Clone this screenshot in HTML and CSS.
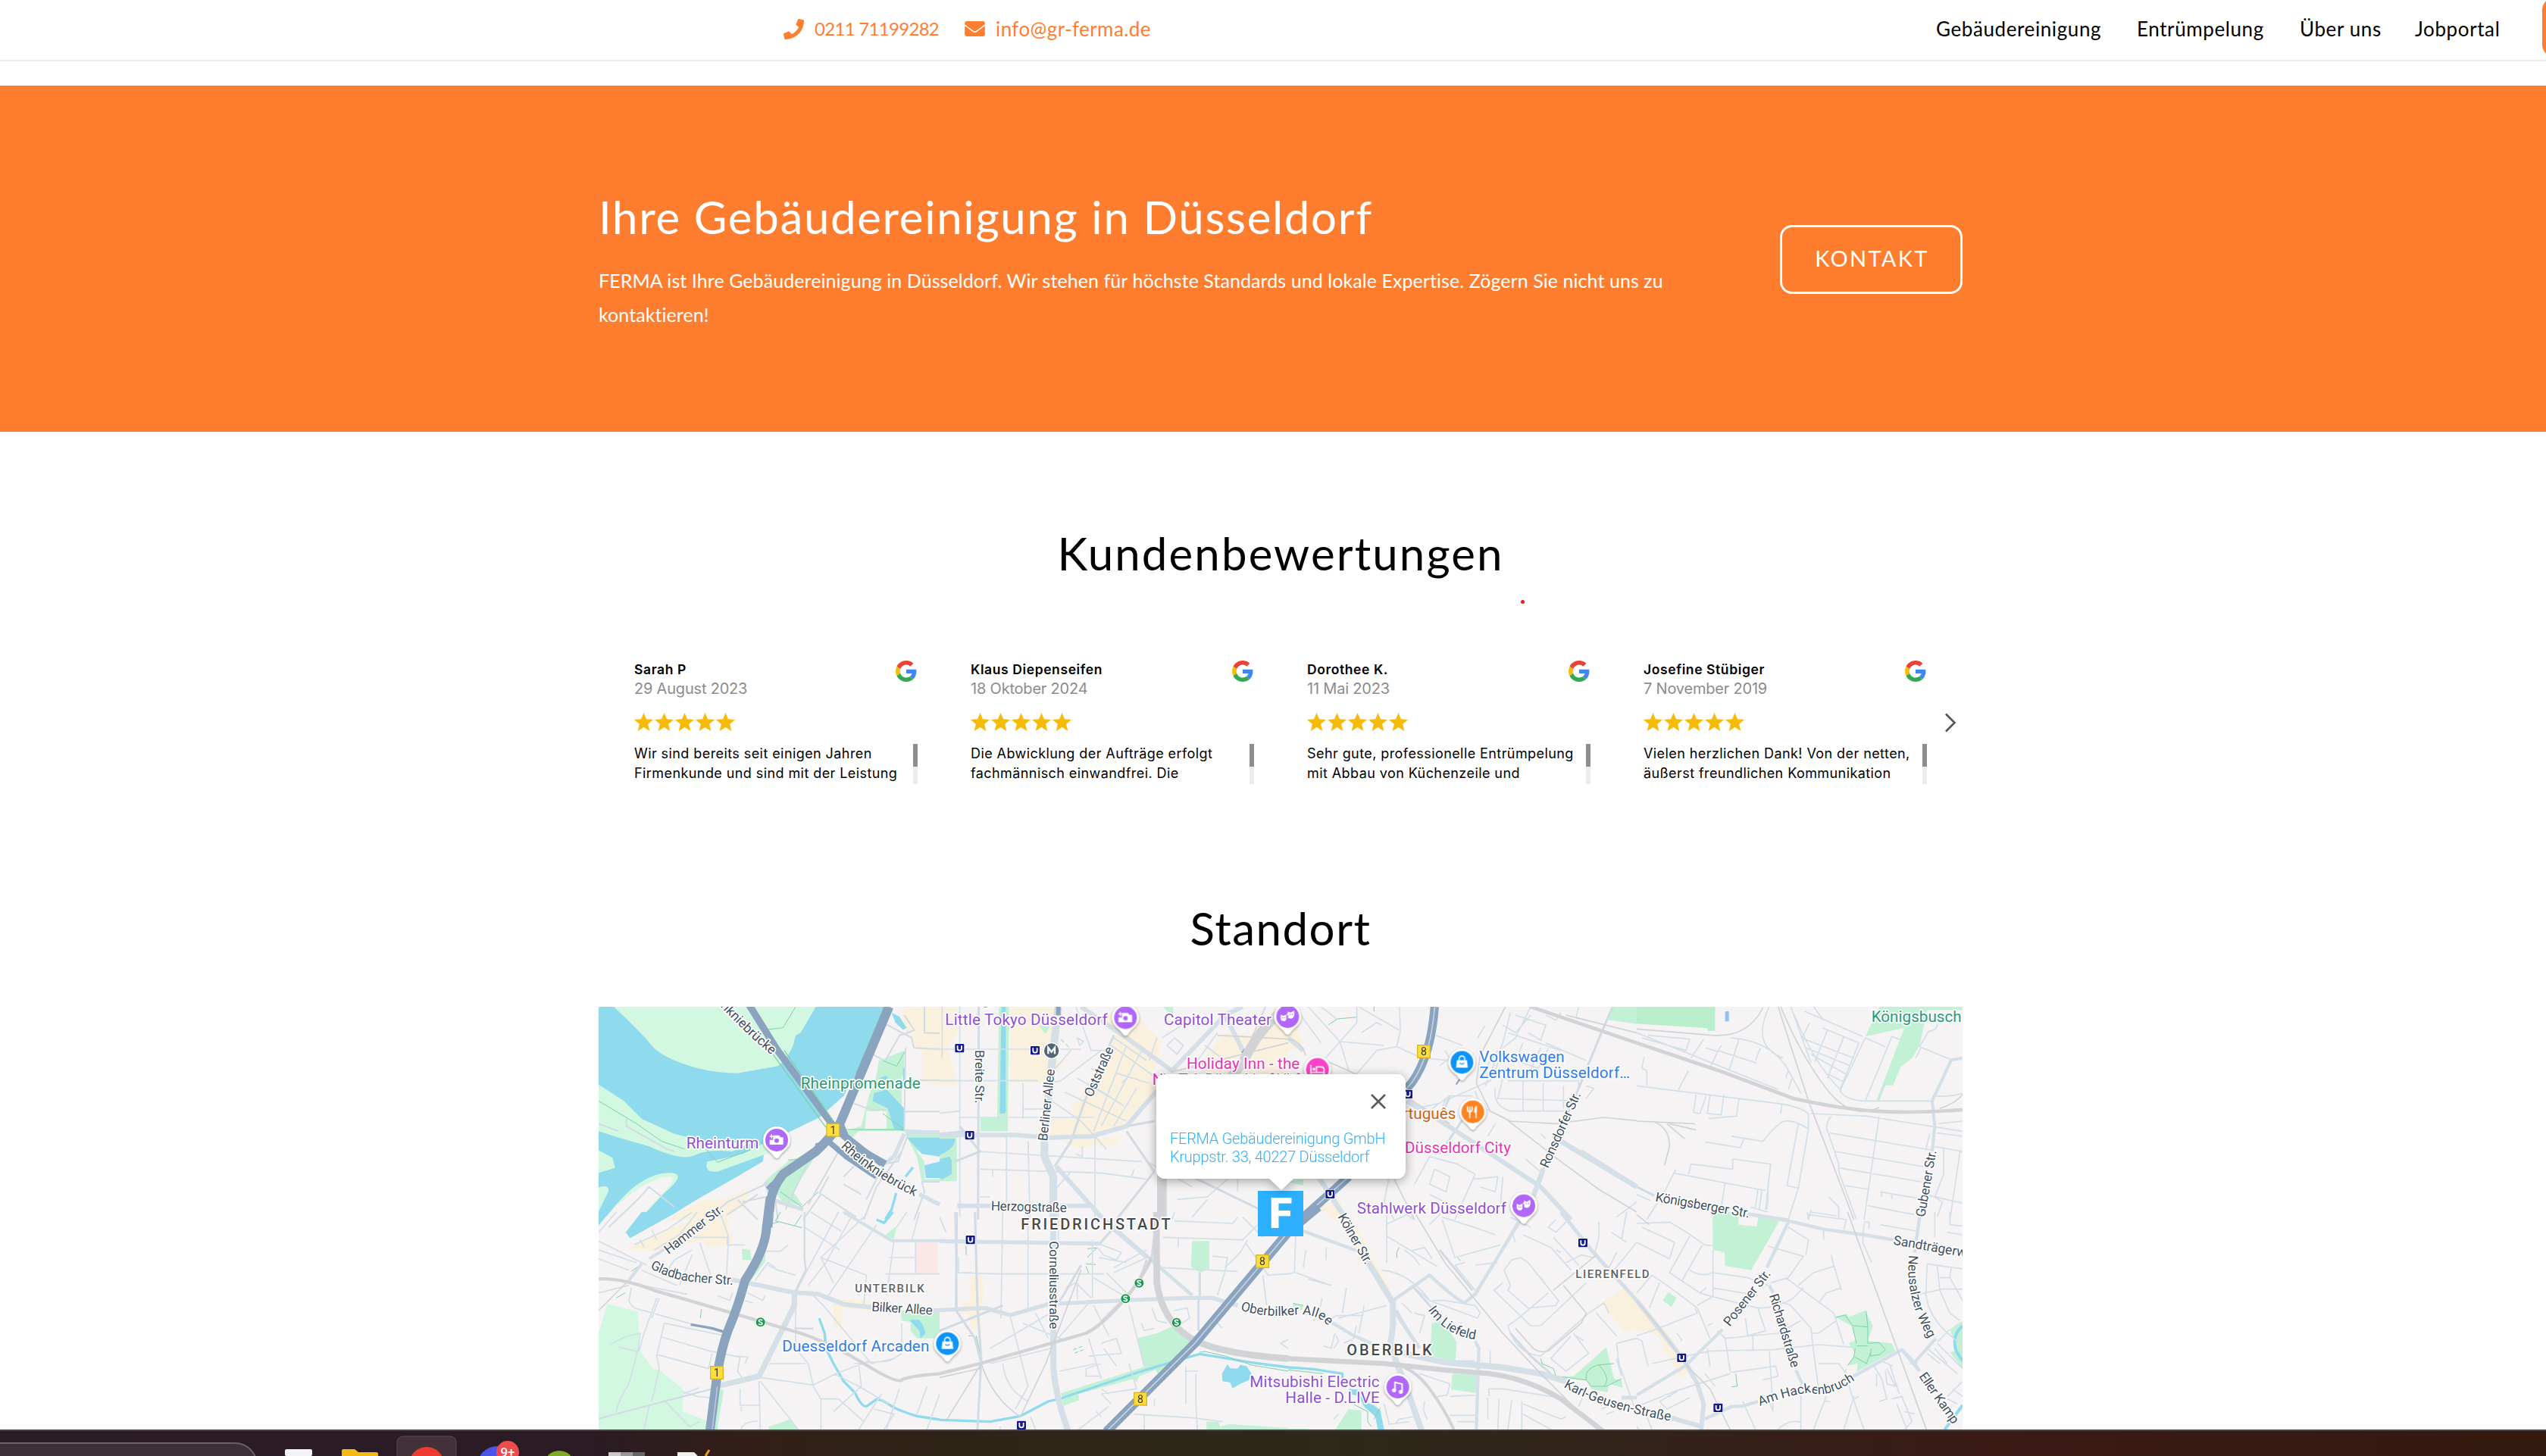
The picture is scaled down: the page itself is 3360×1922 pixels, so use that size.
FILE: index.html
```html
<!DOCTYPE html>
<html lang="de">
<head>
<meta charset="utf-8">
<title>FERMA Gebäudereinigung Düsseldorf</title>
<link rel="stylesheet" href="styles.css">
</head>
<body>
<svg class="defs" aria-hidden="true">
  <defs>
    <symbol id="google" viewBox="0 0 48 48">
      <path fill="#EA4335" d="M24 9.5c3.54 0 6.71 1.22 9.21 3.6l6.85-6.85C35.9 2.38 30.47 0 24 0 14.62 0 6.51 5.38 2.56 13.22l7.98 6.19C12.43 13.72 17.74 9.5 24 9.5z"/>
      <path fill="#4285F4" d="M46.98 24.55c0-1.57-.15-3.09-.38-4.55H24v9.02h12.94c-.58 2.96-2.26 5.48-4.78 7.18l7.73 6c4.51-4.18 7.09-10.36 7.09-17.65z"/>
      <path fill="#FBBC05" d="M10.53 28.59c-.48-1.45-.76-2.99-.76-4.59s.27-3.14.76-4.59l-7.98-6.19C.92 16.46 0 20.12 0 24s.92 7.54 2.56 10.78l7.97-6.19z"/>
      <path fill="#34A853" d="M24 48c6.48 0 11.93-2.13 15.89-5.81l-7.73-6c-2.15 1.45-4.92 2.3-8.16 2.3-6.26 0-11.57-4.22-13.47-9.91l-7.98 6.19C6.51 42.62 14.62 48 24 48z"/>
    </symbol>
    <symbol id="stars" viewBox="0 0 133 24">
      <g fill="#f6bb06">
        <path d="M12.500 0L16 8.300 25 9l-6.900 5.800L20.300 24l-7.800-5-7.800 5 2.200-9.200L0 9l9-.7z"/>
        <path transform="translate(27)" d="M12.500 0L16 8.300 25 9l-6.900 5.800L20.300 24l-7.800-5-7.800 5 2.200-9.200L0 9l9-.7z"/>
        <path transform="translate(54)" d="M12.500 0L16 8.300 25 9l-6.900 5.800L20.300 24l-7.800-5-7.800 5 2.200-9.200L0 9l9-.7z"/>
        <path transform="translate(81)" d="M12.500 0L16 8.300 25 9l-6.900 5.800L20.300 24l-7.800-5-7.800 5 2.200-9.200L0 9l9-.7z"/>
        <path transform="translate(108)" d="M12.500 0L16 8.300 25 9l-6.900 5.800L20.300 24l-7.800-5-7.800 5 2.200-9.200L0 9l9-.7z"/>
      </g>
    </symbol>
  </defs>
</svg>

<header class="topbar">
  <div class="contact">
    <a class="contact-item"><svg class="ic-phone" viewBox="0 0 512 512"><path fill="currentColor" d="M493.400 24.600l-104-24c-11.300-2.600-22.900 3.300-27.500 13.900l-48 112c-4.200 9.800-1.400 21.300 6.900 28l60.600 49.600c-36 76.700-98.900 140.500-177.200 177.200l-49.600-60.600c-6.800-8.300-18.200-11.100-28-6.900l-112 48C3.900 366.500-2 378.100.6 389.400l24 104C27.100 504.200 36.700 512 48 512c256.100 0 464-207.500 464-464 0-11.200-7.700-20.900-18.600-23.400z"/></svg><span class="phone">0211 71199282</span></a>
    <a class="contact-item"><svg class="ic-mail" viewBox="0 0 512 384"><path fill="currentColor" d="M502.300 126.800c3.900-3.100 9.700-.2 9.700 4.700V336c0 26.500-21.500 48-48 48H48c-26.500 0-48-21.500-48-48V131.600c0-5 5.700-7.800 9.700-4.700 22.400 17.400 52.100 39.500 154.100 113.600 21.100 15.400 56.700 47.800 92.200 47.600 35.700.3 72-32.800 92.300-47.600 102-74.100 131.600-96.300 154-113.700zM256 256c23.200.4 56.600-29.200 73.400-41.400 132.700-96.300 142.800-104.700 173.400-128.700 5.800-4.500 9.200-11.500 9.200-18.900V48c0-26.500-21.500-48-48-48H48C21.500 0 0 21.500 0 48v19c0 7.400 3.400 14.300 9.200 18.900 30.600 23.900 40.700 32.400 173.400 128.700 16.800 12.200 50.200 41.800 73.400 41.400z"/></svg><span class="mail">info@gr-ferma.de</span></a>
  </div>
  <nav class="nav">
    <a class="n1">Gebäudereinigung</a><a class="n2">Entrümpelung</a><a class="n3">Über uns</a><a class="n4">Jobportal</a>
  </nav>
  <div class="nav-cta"></div>
</header>

<section class="hero">
  <div class="wrap hero-inner">
    <div class="hero-text">
      <h1>Ihre Gebäudereinigung in Düsseldorf</h1>
      <p>FERMA ist Ihre Gebäudereinigung in Düsseldorf. Wir stehen für höchste Standards und lokale Expertise. Zögern Sie nicht uns zu<br>kontaktieren!</p>
    </div>
    <a class="hero-btn">KONTAKT</a>
  </div>
</section>

<main class="wrap">
  <h2 class="h-reviews">Kundenbewertungen<i class="dot"></i></h2>
  <div class="reviews">
    <article class="review">
      <div class="head"><div><b>Sarah P</b><time>29 August 2023</time></div><svg class="g"><use href="#google"/></svg></div>
      <svg class="stars"><use href="#stars"/></svg>
      <div class="body"><p>Wir sind bereits seit einigen Jahren<br>Firmenkunde und sind mit der Leistung</p><i class="scroll"></i></div>
    </article>
    <article class="review">
      <div class="head"><div><b>Klaus Diepenseifen</b><time>18 Oktober 2024</time></div><svg class="g"><use href="#google"/></svg></div>
      <svg class="stars"><use href="#stars"/></svg>
      <div class="body"><p>Die Abwicklung der Aufträge erfolgt<br>fachmännisch einwandfrei. Die</p><i class="scroll"></i></div>
    </article>
    <article class="review">
      <div class="head"><div><b>Dorothee K.</b><time>11 Mai 2023</time></div><svg class="g"><use href="#google"/></svg></div>
      <svg class="stars"><use href="#stars"/></svg>
      <div class="body"><p>Sehr gute, professionelle Entrümpelung<br>mit Abbau von Küchenzeile und</p><i class="scroll"></i></div>
    </article>
    <article class="review">
      <div class="head"><div><b>Josefine Stübiger</b><time>7 November 2019</time></div><svg class="g"><use href="#google"/></svg></div>
      <svg class="stars"><use href="#stars"/></svg>
      <div class="body"><p>Vielen herzlichen Dank! Von der netten,<br>äußerst freundlichen Kommunikation</p><i class="scroll"></i></div>
    </article>
    <svg class="next" viewBox="0 0 16 26"><path d="M2 1.500L13.500 13 2 24.500" fill="none" stroke="#555" stroke-width="2.600"/></svg>
  </div>
  <h2 class="h-map">Standort</h2>

  <div class="map">
  <svg class="map-svg" viewBox="30 27 5400 1674">
    <defs>
      <g id="pin"><path d="M-54 0A54 54 0 1 1 54 0C54 34 24 42 10 66Q0 78-10 66C-24 42-54 34-54 0Z" fill="#fff"/><circle r="45"/></g>
      <g id="cam"><path fill="#fff" d="M-12-19H10L15-11H26V18H-28V-1H-14V-11Z"/><circle r="9" cy="2" /><path d="M-20-23V-7M-28-15H-12" stroke="#fff" stroke-width="4"/></g>
      <g id="bag"><path fill="#fff" d="M-20-8H20L23 21H-23Z"/><path d="M-11-8V-14A11 11 0 0 1 11-14V-8" fill="none" stroke="#fff" stroke-width="5"/><path d="M-9 2Q0 11 9 2" fill="none" stroke="#0d94fb" stroke-width="4"/></g>
      <g id="masks"><path fill="#fff" d="M-28-8L-18-3-5-8V8Q-7 18-16 18-27 18-28 6ZM2-20L12-16 26-24V-8Q25 6 14 8L2 6V-6H-4Z"/><path d="M-22 5h4M-14 5h4M8-8h4M17-9h4" stroke="#b267fb" stroke-width="4"/></g>
      <g id="u"><rect x="-20" y="-19" width="40" height="38" rx="5" fill="#fff"/><rect x="-18" y="-17" width="36" height="34" rx="4" fill="#14198c"/><path d="M-8-10V2Q-8 9 0 9T8 2V-10" fill="none" stroke="#fff" stroke-width="5.500"/></g>
      <g id="s"><circle r="20" fill="#fff"/><circle r="18" fill="#16994c"/><path d="M8-7Q0-12-6-8-9-3 0 0 9 3 6 8-1 12-8 7" fill="none" stroke="#fff" stroke-width="5"/></g>
      <g id="sh"><rect x="-27" y="-27" width="54" height="54" fill="#d8b52a"/><rect x="-23" y="-23" width="46" height="46" fill="#ffdd3a"/></g>
      <path id="p-rk" d="M988 582Q1110 700 1290 782"/>
      <path id="p-gl" d="M233 222Q320 268 400 276T600 290"/>
      <path id="p-ob" d="M1190 388Q1290 420 1395 408T1540 455"/>
      <path id="p-lief" d="M553 388Q625 492 745 505"/>
      <path id="p-neu" d="M1078 170Q1060 340 1155 500"/>
      <path id="p-hack" d="M487 768Q600 725 690 714 750 740 860 668"/>
      <path id="p-karl" d="M1090 692Q1230 775 1500 825"/>
      <path id="p-kn" d="M420-80Q560 90 715 218"/>
    </defs>
    <rect x="30" y="27" width="5400" height="1674" fill="#f5f3f4"/>

    <!-- north-west: Rhine and harbour -->
    <g>
      <path class="com" d="M1240 27H1380V340L1310 320V200L1275 190V150L1225 100ZM300 870L440 795 560 780 600 750 625 770 600 820 520 870Z"/>
      <path class="water" d="M30 27H1170L1050 290 1000 380 905 465 780 525 690 570 680 640 560 710 420 790 330 845 155 942 130 915 30 960Z"/>
      <path class="pk2" d="M90 27Q200 130 240 180T420 270Q500 290 580 290L740 262Q780 230 800 180L810 140 830 130 890 27Z"/>
      <path class="pk2" d="M30 335L130 400 200 470 330 530 450 560 640 565 560 600Q460 590 410 615T230 580L110 545 30 520Z"/>
      <path class="pk2" d="M460 640Q520 630 600 610L700 560 720 600 500 680Q445 685 460 640ZM30 595L85 625 95 665 30 685ZM30 742Q70 730 70 755L30 838Z"/>
      <path class="pk2" d="M30 900Q130 760 200 720 260 680 320 685T290 765L140 925 155 945 30 960Z"/>
      <path class="land" d="M45 870Q130 780 200 740T310 700 270 780L145 915 150 950 30 960V895Z"/>
      <path class="pk" d="M1140 240L1240 200V300H1230V510L1380 520V555H1300L1290 600 1320 640V710H1380V720H1310L1290 620 1250 540 1240 520 1060 520 1030 550 1000 520 1070 500 1100 380 1130 300ZM690 715L780 640 880 600 900 600 800 760 840 815 760 800Z"/>
      <path class="land" d="M1090 440H1170V510H1085Z"/>
      <path class="water" d="M1190 50L1220 65 1250 110 1235 118 1205 90ZM1120 370L1170 355 1240 430V520L1200 510 1175 430 1115 400ZM1250 545H1380V620L1310 610ZM1320 655L1380 640V705H1325ZM1140 310L1170 300 1180 320ZM1235 270h8v50h-8Z"/>
      <path class="stream" d="M1275 662L1245 700M1208 765L1190 830 1165 868"/>
      <path class="pkline" d="M1160 27L1050 290M690 118L760 110 810 27M30 400L180 490 280 560 370 590M455 590L500 643 640 590M1000 513H1240L1155 450M1155 240L1210 262 1245 200M750 760L835 820 900 760M780 634L870 628"/>
      <path class="rd" style="stroke-width:6" d="M1165 95L1270 150 1278 190 1380 195M1225 135L1165 240M1115 215L1160 240M1040 410L1110 435H1170M1245 190L1240 520M1250 318H1380M1245 442H1380M1320 27V130L1380 132M1240 60L1280 120 1225 140M980 600L860 810M1380 520H1260L1215 640 1155 650M1040 660L1000 700M1160 650L1090 790M1000 730L1070 770M860 640L770 830M1230 600L1130 740 1080 870M940 700L905 765 1050 860M910 770L840 870M1380 720H1310L1320 760 1280 870M730 800L740 870M460 870L540 800 690 730M510 870L660 770M580 790L660 870M600 800L690 780M330 820L230 740 190 785 70 900M140 470V500L300 590 330 600M30 490L110 520"/>
      <path class="md" d="M730 795L840 830M1300 770L1380 810M690 720L715 785M1250 525H1380M1240 530L1200 620 1160 650"/>
      <path class="hw" d="M1180 27L985 490Q950 545 890 600L760 690Q720 740 710 800L700 900"/>
      <path class="hw hwm" d="M620 10L735 195 960 500 1060 590 1165 650"/>
      <path class="hw hwm" d="M985 480L1010 540 1150 650M940 560L1010 620 1130 700M700 750L760 690M890 580L950 560" style="stroke-width:22"/>
      <path class="pkline" d="M720 215L930 505M765 200L960 480" style="stroke-width:4"/>
    </g>

    <!-- north: Stadtmitte -->
    <g transform="translate(1380)">
      <path class="com" d="M0 27H70V130L30 190 60 290 70 340 0 340ZM278 27H450L470 120 540 200 420 330 280 325ZM440 470L540 470 520 420 560 380 590 320 700 130 640 60 760 27 830 120 880 160 840 330 860 350 720 500 610 540H440ZM480 560L720 540 690 580 600 575 560 590ZM1040 240L1130 130 1230 140 1330 27H1380V290H1040Z"/>
      <path class="land" d="M560 27L640 100 560 210 470 250 460 90ZM1230 27H1330L1240 130Z" />
      <path class="pk" d="M235 27H275L270 520H162V468L228 465ZM390 100H440L420 135ZM885 27H925V70ZM0 540H68V718H0Z"/>
      <path class="water" d="M245 27H262V440Q262 450 250 450H238ZM0 550H62Q60 590 0 615ZM0 630L40 620 48 635V690L10 710 0 705Z"/>
      <path class="pkline" d="M480 155L520 195M352 575V610" style="stroke-dasharray:18 10"/>
      <path class="mn" d="M80 27V860M0 195H560M0 320H390M430 330L480 320 640 200M80 465H610M0 448L80 440M330 330V470M330 432H430M155 600L800 640M160 670L640 685 820 710M160 780H200M265 540V800M350 560L358 870M615 545V870M445 400L560 480 660 590M495 365L570 400M570 400L740 480M590 330L730 420M520 200L450 280M680 180L860 310M690 150L820 240M700 290L830 330M740 180L610 520M800 200L640 500M545 310L700 400M860 150L830 240M780 350L690 500M540 27L600 200 680 200M900 180L940 215 965 180 930 150 900 180M880 150L960 100 1060 100M1000 270L1100 130M1050 180L1130 240M940 790L1060 780 1150 700M1000 860L1060 790M1180 690V760M440 770L520 680M600 270L640 300M565 580V620L540 610M770 670L760 700M210 670V700M740 310L720 330M545 150L570 165 555 180ZM820 640L1000 740M10 27V230"/>
      <path class="rd" d="M155 27L152 870M80 500L160 600 60 640M740 520L850 680M850 480L740 500M1000 700L1290 840M850 680L700 870M455 660L520 560 575 400 690 140M110 520L0 530"/>
      <path class="md" d="M0 535H300L430 545 600 540 740 500 860 360M70 815H600M462 660L640 860M560 27L740 150 920 280 1130 60 1200 27M1130 60L1200 200" style="stroke-width:18"/>
      <path class="md" d="M470 27L450 200 415 540V620L450 700V870" style="stroke-width:30"/>
      <path class="hwl" d="M470 27V60M1200 200L1215 212" style="stroke:#8aa3bf;stroke-width:18;fill:none"/>
      <path class="rail" d="M1380 27Q1270 100 1200 250L1000 480 880 700V870" style="stroke-width:38"/>
      <path class="railt" d="M1100 140L1380 155M920 285L1380 170M1290 27L1210 210"/>
    </g>

    <!-- north-east -->
    <g transform="translate(2760)">
      <path class="pk" d="M1285 27H1380V95L1260 78ZM0 720L60 710V735Z"/>
      <path class="com" d="M0 27H40V130L60 170 20 200H0ZM120 820L200 790 230 870H180Z"/>
      <path class="pkline" d="M340 27V45M160 98L195 75 272 68M425 580"/>
      <path class="mn" d="M80 27L205 165 380 180M50 60L130 170M272 27V90L205 165 130 250M205 165L240 280M290 130L350 90 370 100M440 27L445 120 430 185M130 27L160 50 190 75M280 27L440 120M430 185L350 200 240 330M430 185L530 230 640 240 700 210M585 140L690 180M620 200L640 230 600 260M880 50L850 170 780 340M850 100L900 130 960 60M960 27L900 150 850 190M900 60L1020 100 1000 160 950 130M870 130L1080 200M1020 60L1060 80 1080 50M1150 27L1140 70 1220 90M930 170L900 240 990 270 1030 190M1020 170L1180 240M1000 190L950 300M830 200L760 300M750 150L780 100M840 230L800 320 620 400 600 460M870 320H1150V350M850 310L830 390 1150 400M820 350Q810 420 880 440H1100M930 320V440M1010 330V440M1090 340V430M740 360L760 420 860 470M730 380L640 380 570 430M600 410L500 430M560 620L500 730M560 620L670 650 740 690 660 870M580 670L640 700 625 760 560 730ZM400 700L380 800 420 870M730 710L830 700 820 760 760 740M850 700L840 820M1180 340L1210 350 1180 390M1000 530L1020 550M820 490L790 540M560 770L700 840M940 630L1010 690M1380 800L1300 860"/>
      <path class="rd" d="M1285 27L1240 130 1150 350 980 740M610 490L700 540M700 460L600 610M640 380L620 430"/>
      <path class="md" d="M0 150L60 200M470 400L620 490 1000 740 1120 870M1160 600L1380 740" style="stroke-width:18"/>
      <path class="md" d="M1080 560L1380 740M120 700L230 870M1010 670L970 780" style="stroke-width:20"/>
      <path class="rail" d="M960 27L1380 170" style="stroke-width:14"/>
      <path class="railt" d="M860 27L760 220 745 330 800 440 880 480 1060 490 1250 465 1380 478M160 245L460 380 640 490M860 470L1080 640 1230 750 1380 840M420 710L500 870M1100 60L1380 130M0 155Q50 160 70 220"/>
      <path class="hw" d="M580 27Q570 150 540 230T470 350" style="stroke-width:34"/>
      <path class="hw" d="M240 700L60 860" style="stroke-width:34"/>
      <path class="hwc" d="M580 27Q570 150 540 230T470 350M240 700L60 860"/>
      <path d="M680 312L665 335" stroke="#8aa3bf" stroke-width="6"/>
    </g>
    <g transform="translate(4140)">
      <path class="pk" style="fill:#b8eecb" d="M0 27H310V122H282L280 112 0 94Z"/>
      <path class="pk" d="M960 27H1290V40H1150L1120 180 1090 230 1045 265 1015 338H985L960 400 950 395 1060 110 905 145ZM300 870L310 845 400 850 405 870ZM480 862L560 870H480Z"/>
      <path fill="#8fc1fb" d="M350 45h15v40h-15Z"/>
      <path class="mn" d="M525 27Q450 180 580 230M45 140L210 155 195 200 20 150M265 155L215 230M275 190L320 205 335 180M320 205L295 260M320 200L475 250M405 155L365 280M370 150Q520 160 590 260L650 370M490 190L470 240M0 130L560 355M205 280L165 355M0 340L560 410Q640 420 680 450M30 225L20 270 40 280 40 340M235 375L225 445 250 450 275 380M290 375L280 450 335 455 345 375M405 390L395 460 285 470M575 415L570 450M600 280L590 310M615 310L600 355M680 450V510Q600 460 565 490T500 560L375 540M425 550L410 585 270 562M640 490L595 735 640 745 600 870M680 510L640 745M380 630L530 650 510 830M380 630V670L215 650 205 690M145 685L510 755M155 670L115 750 40 870M350 725L335 820M480 750L470 820M495 755L485 830M520 750V800L515 830M610 27L690 250M625 60Q700 250 810 360M665 45L895 145M700 27L740 80M685 90L655 150M755 120L705 245M820 145L755 310M880 170L805 355M735 110L880 170M650 150L860 230M670 190L845 260M690 215L830 295M760 295L820 325M905 150L985 185M905 150L805 360Q830 400 910 400H1165M1050 160L1010 145 905 400M985 325L960 390M1190 95Q1190 120 1155 125L1120 185 1240 235M1125 190L1105 230M690 450L910 460 1290 520M770 460Q740 500 760 530L800 650V680L870 870M765 527L1170 595M785 600L1135 660M800 665L1125 720M825 735L920 750M960 460L900 870M1170 380Q1240 385 1290 370M1195 490L1290 480M1190 527L1290 540M1180 580L1290 600M1160 530L1145 590M1215 590V690L1180 780 1210 800 1190 860M1280 600L1240 870M915 815L1100 850M965 760L1110 785M970 760V780M1010 770V790M1140 770L1290 805M690 830L680 870M760 780L800 820V870M690 840L790 855M450 820L520 840M0 770L55 795"/>
      <path class="rd" d="M0 740L70 775M440 845L600 870"/>
      <path class="md" d="M1290 230L1245 238 1170 400 1180 500 1170 600" style="stroke-width:12"/>
      <path class="rail" d="M0 170L340 285 620 390Q800 430 940 440T1290 435" style="stroke-width:14"/>
      <path class="railt" d="M0 115L300 140Q440 150 500 30M560 27L680 400 860 870M570 27Q650 220 750 350T960 425M0 480L230 490M60 480Q130 500 130 580L110 655M120 490L190 550M130 490L235 515M1200 430Q1260 410 1290 375"/>
    </g>

    <!-- south-west -->
    <g transform="translate(0 840)">
      <path class="com" d="M140 150L250 90 480 0H535L565 130 460 140 440 110 250 155ZM960 345L1100 350 1195 400 1000 380 990 470 960 450Z"/>
      <path class="water" d="M137 80L200 0H340L155 103ZM30 0H75L30 52Z"/>
      <path class="pk2" d="M65 362L185 395 195 550 245 620 270 625 363 700V790L455 825V861H30V480Z"/>
      <path class="pk" d="M597 145L630 150 635 190 600 190ZM690 150L690 195 630 275 620 270ZM1155 100L1210 55 1200 105ZM705 850L790 820 820 861H705ZM510 700L525 705 500 861H485ZM1225 390H1380V500H1290L1265 470V435L1230 430Z"/>
      <path fill="#fbe7e6" d="M1287 120H1372V243H1287Z"/>
      <path class="water" d="M1260 427H1300L1315 450 1325 480 1305 500 1300 470Z"/>
      <path class="stream" d="M903 420L925 480 930 540 960 600 1000 670 1045 715Q1070 770 1090 770L1130 742Q1150 740 1180 762T1290 808L1380 822M1130 30L1160 43 1195 0"/>
      <path class="pkline" d="M750 0L730 35 835 62M720 45L740 40M835 10L805 55M160 235L200 205M100 340L135 320M437 385L433 420" />
      <path class="mn" d="M100 0L30 80M250 150L350 90 420 0M30 115L220 210M30 150L180 200M30 185L150 230M170 130L300 70 400 0M240 70L260 110M195 110L210 140M510 0L545 100 535 270M400 100H540V130H610M290 250L330 190 400 150M430 120L480 270M350 290L400 170M340 290L200 230M150 280L380 325M160 300L150 350Q160 380 190 385L530 480M260 340L210 480 190 550M270 340L240 420M290 440L530 490M290 440L260 570 270 620 240 750M280 495L470 550 590 575 580 630 600 660M265 565L465 620 480 560M110 535L185 553 195 480Q130 490 75 525M185 550L150 680Q110 740 100 790M230 765L210 861M290 745L390 850 430 830M365 720L430 695M360 710L420 730 470 735M30 320L150 290M500 330L550 350 560 320M620 320L680 350 690 330M610 350L640 360M720 0L690 150M690 155H750L780 130M845 60L985 150M870 0L990 75M910 180L1090 250 1080 365M980 0L840 260M1080 20L910 180 960 280M1030 20L930 200 860 290M1130 50L940 330M1200 110L1170 330M1180 180H1280M1165 245H1380M1285 110V245M1300 0L1270 110M1250 0L1210 60M870 320L920 370 1110 600 1200 580M805 330L840 260M810 330V540L860 600 880 690 910 740V861M705 600H850M670 655L880 685 970 640 1100 590M670 670L820 861M730 220L700 200 650 270M700 210L740 230 810 250M580 570L620 575 610 600M590 700V765H665M595 770V790M665 670L670 861M595 861Q600 830 660 828M960 640L1060 690 1180 760M1060 600L1070 690 960 790M910 740L980 740 1080 830M1150 720L1060 861M1120 780L1200 800 1160 861M1220 700L1170 861M1330 690L1290 800M1380 720L1330 861M1040 600L1180 590 1230 560M870 460H880M1230 440V520"/>
      <path class="rd" style="stroke-width:7" d="M30 818L480 700M845 0V180L850 230 805 320M805 460L880 462"/>
      <path class="md" d="M545 265L800 318 900 325 1000 365 1120 378M1350 390H1380" style="stroke-width:18"/>
      <path class="md" d="M1000 0L1190 113H1380M230 185L320 130M200 205L150 270" style="stroke-width:12"/>
      <path class="md" d="M805 320V370L665 650 500 690" style="stroke-width:22"/>
      <path class="rail" d="M30 265Q120 260 250 310L560 400 830 480Q950 520 1080 600T1230 665 1380 640" style="stroke-width:13"/>
      <path class="railt" d="M150 270L30 390"/>
      <path class="hw" d="M710-60L695 60Q690 150 610 270 580 380 550 450T500 640L470 870"/>
      <path class="hw" d="M395 445L480 460 540 478" style="stroke-width:10"/>
      <path d="M480 861L500 690" stroke="#c3cfdc" stroke-width="4" fill="none"/>
    </g>

    <!-- south: Friedrichstadt -->
    <g transform="translate(1380 840)">
      <path class="com" d="M122 250H165L175 300 160 420 170 455 130 465 110 400 72 400 90 370 120 350Z"/>
      <path class="pk" d="M1000 115H1068V225L1030 240 995 215ZM780 500L860 480 930 450 1000 520 940 580 810 612ZM480 718L930 575 900 640 870 650 855 625 790 650 780 675 770 660 550 720 552 745 490 768ZM1057 830L1105 830 1110 850 1145 840 1380 855V861H1057Z"/>
      <path class="water" d="M1118 640L1140 602 1150 618 1180 620 1190 605 1215 610 1235 640 1225 665 1190 680 1160 698 1150 675 1120 670Z"/>
      <path class="stream" d="M0 823L200 830 320 808 430 750 480 738 800 630 950 585 1030 562 1110 575 1230 595 1380 615"/>
      <path class="pkline" d="M585 145L622 142 585 180M580 205L618 208M580 215L590 243M105 135V170M115 490L135 490 160 580M145 490L162 570M1030 555L1050 552 1130 570 1220 600 1230 605 1380 630"/>
      <path class="pkline" d="M530 545L570 530M535 558L570 545" style="stroke-dasharray:14 8"/>
      <path class="mn" d="M0 20L25 80M75 240L240 245H650M75 178V240H130M350 0V390M250 0L243 420M605 110V340M545 280V345M470 0V110M600 340L540 280 500 300M630 125L720 160 700 190 650 170 625 140M630 180L740 200M690 220L820 150M610 260L760 350M660 240L740 320M690 240L820 180M885 220L1180 235M945 100V140M885 100L1200 110 1280 30M1080 175L1140 180 1130 235 1100 330M1220 110L1190 160 1130 220M930 35L1160 45 1180 20M930 0L920 30M1210 120L1300 250 1380 245M1200 20L1280 100M1280 250L1295 370M750 370L810 610M610 370L670 490M640 430L740 330M280 415L350 690 300 780M330 440L500 510M470 500L590 360M380 400L430 500M590 500L640 660M590 570L720 560 700 500 640 520M650 540L700 610M475 630L620 600M580 620L640 600M580 620V650L640 650M750 600L780 700 640 720 680 760M640 700L670 720M550 861L670 770M620 790L640 810M250 600Q260 700 350 750M200 600L440 540M200 540L440 400M770 800L850 805 1000 815 1120 830M810 805V861M850 740V770M975 610V760M970 630H1025M1015 640V760L1020 861M930 390L980 380 990 420 960 440M840 380L860 430 900 440M800 440L810 470 850 460M1100 440L1120 460M240 850V861M360 810L380 861M1380 505L1350 520 1380 540M60 0L70 400"/>
      <path class="rd" d="M140 0L150 380 165 580 150 861M68 0L65 390 140 500 165 600M1025 350V470M1030 240V350M250 370L0 470M560 210L490 330 440 400M700 50L630 130M820 190L780 300M860 0L840 180"/>
      <path class="md" d="M0 115L630 125M0 388L180 380 280 408 430 365 720 350 980 340 1080 340 1180 370" style="stroke-width:16"/>
      <path class="md" d="M450 0V600Q455 720 510 870" style="stroke-width:24"/>
      <path class="md" d="M620 0L850 200 1000 330M690 70L820 180" style="stroke-width:14"/>
      <path class="rail" d="M0 640L160 600 580 480Q640 450 720 360T840 180" style="stroke-width:13"/>
      <path class="rail" d="M858 0L860 280Q880 420 980 490T1380 580" style="stroke-width:26"/>
      <path class="railt" d="M165 600L30 820M165 600Q210 740 320 810L420 600 560 230M0 655L160 620"/>
      <path class="hw" d="M1380 80L1010 520 660 870" style="stroke-width:36"/>
      <path class="hwc" d="M1380 80L1010 520 660 870"/>
    </g>

    <!-- south: Oberbilk -->
    <g transform="translate(2760 840)">
      <path class="com" d="M180 0L250 20 400 300 370 320 320 210 210 40ZM1240 360L1330 300 1380 320V465L1330 475Z"/>
      <path class="pk" d="M18 360L60 370 55 390 20 385ZM568 440L610 430 668 515 662 590 562 570ZM650 640L750 645 742 716 645 702ZM190 855L240 780 290 785V861H190ZM1060 650L1130 650 1260 535 1275 600 1290 660 1320 665 1325 695 1270 680 1265 715 1200 700 1180 665ZM0 858H80V861H0Z"/>
      <path class="water" d="M240 700L290 705 300 750 340 765 365 785 380 861H355L345 810 300 770 280 730 245 720Z"/>
      <path class="stream" d="M0 615L100 622 215 640V660"/>
      <path class="pkline" d="M430 182V160L440 140M670 180L683 193M20 362L60 370M0 625L140 640M260 762L315 790V830L330 850M365 775L340 820M1000 580L1005 600 1050 620 1060 650 1180 665Q1170 620 1230 605L1290 600M1230 605Q1280 660 1250 690M1320 660L1260 690 1200 690 1180 665"/>
      <path class="mn" d="M60 90L30 80 25 240 0 245M30 240L170 290 80 265M60 220L70 150M135 340L120 410 100 430M160 430L190 410H295L300 370M150 140V190M230 300L215 400M295 400L280 480M390 370L200 420M390 0V200M385 50L470 10 500 30M390 95L590 215M485 155L540 140 570 185M460 150L500 180 520 210M610 30L660 180 840 130M560 50L610 0M610 20L750 65 820 90M660 210L700 200M740 210L830 200M660 210L740 310M370 230Q480 240 560 350L750 420 760 400 740 370 620 350 570 350M500 300L560 350M450 360L490 400M500 400L540 410 520 480M885 190L855 230 880 290 870 310 950 380 1060 370 1070 350 950 200 920 180ZM850 280L815 310 960 450 1000 450 1180 280M870 450L900 430 1030 320M880 20L960 60M930 90L1040 140 1120 230M900 120L890 90M1060 30L1030 60 1060 80 1120 20M1060 150L1080 160M980 240L1010 270M1100 200L1160 170 1210 180M1230 40V100L1210 180M1050 100L1150 210M1280 80L1340 120M1340 0L1320 110M1300 160L1270 220M1380 120L1290 230M1190 400L1250 360 1270 400M1220 400L1300 490M1130 480L1190 560 1100 630 1040 580 1120 490M1140 490L1170 510M870 450Q900 560 1000 570L1190 400M1300 520L1380 500M1300 520L1310 600 1380 800M1300 580L1320 650M520 640L640 680 630 725 590 730M670 590H740M640 730L740 725M640 805H740M670 830L740 830M795 730V700L850 700 1100 740M790 735V820M835 740L830 861M885 745L870 861M925 750V861M930 760L1080 820 1100 810M930 800L1040 861M540 750L535 780 550 820M420 840L440 820 500 810M380 760L400 840 480 830M185 480L170 540 140 530M190 490L200 510 180 540M800 550V600M270 450L260 500 220 520M180 820L200 800M1150 770L1180 700M1240 780L1290 760M1260 800L1290 790"/>
      <path class="rd" d="M910 40L740 330M430 390L510 530M490 300L560 250M490 290L560 370 600 420M880 480L960 570 1040 640M600 150L730 310"/>
      <path class="md" d="M60 75L290 160 320 200M160 430L260 490 330 520M415 350L560 250Q680 360 700 358L740 325 915 40M740 510L755 540 745 861" style="stroke-width:13"/>
      <path class="md" d="M315 195L415 360V450L405 520 430 600 470 700 530 870M460 560L620 595 850 615 1000 640 1100 670" style="stroke-width:24"/>
      <path class="md" d="M1080 0L1200 150 1380 350M420 390L520 540M1320 735H1380" style="stroke-width:15"/>
      <path class="rail" d="M0 580L380 600 620 625 800 640Q950 660 1080 740L1250 870" style="stroke-width:20"/>
      <path class="rail" d="M420 600Q500 620 560 700T660 870" style="stroke-width:12"/>
      <path class="railt" d="M500 0L620 200 850 480 1000 640 1140 780M1220 170L1050 310M1090 290L1180 400 1160 440 1030 550Q1000 560 970 540L900 460"/>
      <path class="hw" d="M120-20L0 80" style="stroke-width:34"/>
    </g>

    <!-- south-east -->
    <g transform="translate(4140 840)">
      <path class="com" d="M0 370L60 430 120 470 165 560 210 620 175 660 160 640 130 570 100 550 110 530 80 490 0 465Z"/>
      <path class="pk" d="M300 0H400L405 50 475 58 482 20 565 35 453 230 350 213 348 160 302 150ZM125 317L158 340 138 375 103 350ZM785 415L830 402 840 415 905 390 935 450 915 510 1010 520 1025 550 870 632 875 600 835 607 865 560 840 520 870 505 850 450ZM1240 465L1280 435H1290V620L1240 555 1270 548Z"/>
      <path class="land" d="M405 15L475 25V55L402 50Z"/>
      <path class="stream" d="M1290 450Q1245 490 1265 550L1290 590M1290 765L1220 861" style="stroke-width:12"/>
      <path class="pkline" d="M785 418L825 408 855 450 915 455 908 392M855 455L870 520M915 455V520L960 517 985 545 960 565 925 570 928 540M865 540L860 575 835 607M865 575L910 600 925 560M870 530H915M392 640L398 690 375 692"/>
      <path class="mn" d="M0 45L130 40 190 75 270 130 302 132M20 60L150 120 130 185 0 120M210 95L130 240 250 320 300 335M260 130L180 270M0 320L60 250 120 290 240 380 290 500M50 380L90 280M230 380L240 400 60 470 0 490M210 230Q260 260 300 240M302 150V335M302 240L440 260 520 290M250 320L275 300M240 370L300 335 480 380Q560 380 620 340L660 300M300 300L480 330M520 135L660 175 600 260 530 280M590 260L780 400 820 525M600 60L680 110 670 170M640 290L700 240 780 215M560 350L610 370 690 460 700 550 720 700M720 360L750 320 810 300M695 480L720 480 790 430M480 380L510 470 440 490 430 420M350 500L560 480 650 430M60 600L290 550 540 545 720 525 850 535M320 470L350 500 370 630M460 490V550M280 540L290 610M370 635L550 610 560 650 500 665M370 640L150 710 0 770M525 550L540 780M650 680L650 861M720 600L800 600 830 640 850 720 900 861M750 730L700 861M740 750H770M830 620L820 650M860 730L820 861M860 740L880 730M940 610L970 660 990 740 960 750M950 640V690M990 620L1025 690 990 680 985 630M1000 600L1040 720M970 590L1015 610M1010 740L1050 730 1090 830 1060 861M1030 760L1070 861M1060 790L1100 800M680 30L675 0M680 10L830 30 820 70M740 70L740 110M770 170L780 210 810 310M900 40H920V65M900 45L895 120 930 200M965 50L1105 75M1180 0V100M1240 0V50L1290 55M1230 80L1290 90M1150 205L1290 225M1150 205L1145 320Q1150 400 1220 470L1290 530M1190 215L1200 310 1240 400 1280 430M1245 220L1240 260 1290 350M1200 260H1240M1120 325L1210 305 1290 305M1240 465L1190 515M1180 540L1230 600M1150 560L1200 600M1190 520L1290 620M1290 670L1230 730M1250 700L1290 730M1230 740L1270 760M90 750L120 780 210 735M90 750L160 710M110 720L135 730M0 850L10 861M40 810L60 861M520 740L540 790M270 640L310 690M160 480L180 510M300 440L280 450M420 750L470 861M560 861Q600 820 650 832M0 500L20 510 45 610M1080 600L1110 600 1060 550M1150 540L1270 640"/>
      <path class="md" d="M440 8L600 35 740 68 900 90 1015 110M600 40L515 220M525 290L540 320M0 725L190 610 340 465M630 625L655 680M380 770L420 768 480 750M1120 20L1100 160M1185 500L1100 595M840 660L1050 545 1120 630M270 820L380 768M1100 600L1120 630" style="stroke-width:13"/>
      <path class="md" d="M0 350L190 590 240 680 265 760 255 861M120 810L260 850" style="stroke-width:18"/>
      <path class="railt" d="M835 0L1150 870M0 350L90 460 200 610 290 700 370 861M0 10L50 50"/>
    </g>

    <!-- labels -->
    <g class="lb st">
      <text><textPath href="#p-kn" startOffset="100%" text-anchor="end">Rheinkniebrücke</textPath></text>
      <text><textPath href="#p-rk">Rheinkniebrücke</textPath></text>
      <g transform="translate(1380)">
        <text transform="translate(140 198) rotate(90)" textLength="212">Breite Str.</text>
        <text transform="translate(426 560) rotate(-84)" textLength="287">Berliner Allee</text>
        <text transform="translate(604 388) rotate(-66)" textLength="212">Oststraße</text>
        <text transform="translate(203 833) rotate(1.500)" textLength="300">Herzogstraße</text>
      </g>
      <g transform="translate(2760)"><text transform="translate(1028 668) rotate(-66)" textLength="322">Ronsdorfer Str.</text></g>
      <g transform="translate(4140)">
        <text transform="translate(72 797) rotate(10)" textLength="378">Königsberger Str.</text>
        <text transform="translate(1140 862) rotate(-80)" textLength="268">Gubener Str.</text>
      </g>
      <g transform="translate(0 840)">
        <text transform="translate(307 168) rotate(-38)" textLength="280">Hammer Str.</text>
        <text><textPath href="#p-gl" textLength="340">Gladbacher Str.</textPath></text>
        <text transform="translate(1110 392) rotate(3.500)" textLength="242">Bilker Allee</text>
      </g>
      <g transform="translate(1380 840)">
        <text transform="translate(434 115) rotate(90)" textLength="348">Corneliusstraße</text>
        <text><textPath href="#p-ob">Oberbilker Allee</textPath></text>
      </g>
      <g transform="translate(2760 840)">
        <text transform="translate(195 18) rotate(60)" textLength="222">Kölner Str.</text>
        <text><textPath href="#p-lief">Im Liefeld</textPath></text>
        <text><textPath href="#p-karl">Karl-Geusen-Straße</textPath></text>
      </g>
      <g transform="translate(4140 840)">
        <text transform="translate(1014 128) rotate(10)">Sandträgerweg</text>
        <text><textPath href="#p-neu">Neusalzer Weg</textPath></text>
        <text transform="translate(368 455) rotate(-52)" textLength="268">Posener Str.</text>
        <text transform="translate(524 330) rotate(73)" textLength="302">Richardstraße</text>
        <text><textPath href="#p-hack">Am Hackenbruch</textPath></text>
        <text transform="translate(1116 650) rotate(55)" textLength="235">Eller Kamp</text>
      </g>
    </g>
    <g class="lb ds">
      <text x="1702" y="910" textLength="592">FRIEDRICHSTADT</text>
      <text x="2992" y="1407" textLength="337">OBERBILK</text>
      <g class="sm"><text x="1045" y="1158" textLength="274">UNTERBILK</text><text x="3898" y="1102" textLength="292">LIERENFELD</text></g>
    </g>
    <g class="lb poi">
      <text fill="#2a9a72" x="830" y="350" textLength="474">Rheinpromenade</text>
      <text fill="#2a9a72" x="5069" y="87">Königsbusch</text>
      <text fill="#8f4fd6" x="377" y="587" textLength="287">Rheinturm</text>
      <text fill="#8f4fd6" x="1402" y="100" textLength="643">Little Tokyo Düsseldorf</text>
      <text fill="#8f4fd6" x="2268" y="98" textLength="426">Capitol Theater</text>
      <text fill="#e934b4" x="2358" y="272" textLength="448">Holiday Inn - the</text>
      <text fill="#e934b4" x="2222" y="336" textLength="584">Niu, Tab Düsseldorf Hbf</text>
      <text fill="#2f7ce8" x="3517" y="247" textLength="337">Volkswagen</text>
      <text fill="#2f7ce8" x="3517" y="308" textLength="596">Zentrum Düsseldorf…</text>
      <text fill="#d2600f" x="3424" y="472" text-anchor="end">Português</text>
      <text fill="#e934b4" x="3222" y="607" textLength="420">Düsseldorf City</text>
      <text fill="#8f4fd6" x="3032" y="845" textLength="592">Stahlwerk Düsseldorf</text>
      <text fill="#2f7ce8" x="757" y="1391" textLength="582">Duesseldorf Arcaden</text>
      <text fill="#8f4fd6" x="2608" y="1533" textLength="514">Mitsubishi Electric</text>
      <text fill="#8f4fd6" x="3122" y="1595" text-anchor="end" textLength="373">Halle - D.LIVE</text>
    </g>
    <g class="pins">
      <g transform="translate(735 555)" fill="#b267fb"><use href="#pin"/><use href="#cam"/></g>
      <g transform="translate(2116 70)" fill="#b267fb"><use href="#pin"/><use href="#cam"/></g>
      <g transform="translate(2758 66)" fill="#b267fb"><use href="#pin"/><use href="#masks"/></g>
      <g transform="translate(2876 275)" fill="#fa43c6"><use href="#pin"/><path d="M-26-18V20M-26 12H26M26 12V-2Q24-10 14-10H-4V12M26 12V20" fill="none" stroke="#fff" stroke-width="5"/><circle cx="-14" cy="-1" r="6" fill="#fff"/></g>
      <g transform="translate(3448 247)" fill="#0d94fb"><use href="#pin"/><use href="#bag"/></g>
      <g transform="translate(3491 443)" fill="#ff8420"><use href="#pin"/><path d="M-21-22V-8Q-21 0-12 0T-3-8V-22M-12-22V25M13-22V25" fill="none" stroke="#fff" stroke-width="5"/><path fill="#fff" d="M5-2Q5-22 16-23V3H5Z"/></g>
      <g transform="translate(3693 815)" fill="#b267fb"><use href="#pin"/><use href="#masks"/></g>
      <g transform="translate(1411 1361)" fill="#0d94fb"><use href="#pin"/><use href="#bag"/></g>
      <g transform="translate(3194 1533)" fill="#b267fb"><use href="#pin"/><path d="M-11 14V-19L17-12V19" fill="none" stroke="#fff" stroke-width="6"/><circle cx="-15" cy="13" r="8" fill="#fff"/><circle cx="12" cy="19" r="8" fill="#fff"/></g>
    </g>
    <circle cx="1562" cy="5" r="27" fill="#4a6478" stroke="#fff" stroke-width="6"/>
    <g transform="translate(1823 201)"><circle r="33" fill="#fff"/><circle r="29" fill="#4f677a"/><path d="M-13 13V-12L0 5 13-12V13" fill="none" stroke="#fff" stroke-width="7"/></g>
    <use href="#u" x="1459" y="191"/><use href="#u" x="1758" y="200"/><use href="#u" x="1499" y="536"/>
    <use href="#u" x="3234" y="373"/><use href="#u" x="2926" y="769"/><use href="#u" x="1502" y="950"/>
    <use href="#u" x="1704" y="1684"/><use href="#u" x="3927" y="962"/><use href="#u" x="4318" y="1417"/><use href="#u" x="4462" y="1615"/>
    <use href="#s" x="671" y="1276"/><use href="#s" x="2170" y="1121"/><use href="#s" x="2116" y="1183"/><use href="#s" x="2318" y="1277"/>
    <g class="shields">
      <use href="#sh" x="958" y="515"/><text x="958" y="530">1</text>
      <use href="#sh" x="498" y="1476"/><text x="498" y="1491">1</text>
      <use href="#sh" x="3297" y="204"/><text x="3297" y="220">8</text>
      <use href="#sh" x="2658" y="1035"/><text x="2658" y="1051">8</text>
      <use href="#sh" x="2175" y="1580"/><text x="2175" y="1596">8</text>
    </g>
  </svg>
  <div class="marker">F</div>
  <div class="info">
    <svg class="close" viewBox="0 0 20 20"><path d="M1 1L19 19M19 1L1 19" stroke="#5c5c5c" stroke-width="2.700"/></svg>
    <p>FERMA Gebäudereinigung GmbH<br>Kruppstr. 33, 40227 Düsseldorf</p>
  </div>
  </div>
</main>

<footer class="taskbar">
  <div class="search"></div>
  <svg class="apps" viewBox="0 0 640 35">
    <rect x="20" y="26" width="36" height="9" rx="2" fill="#f4f4f6"/>
    <path d="M95 28q0-2 2-2h15l5 4h24q2 0 2 2v3H95z" fill="#f5b915"/>
    <rect x="168" y="9" width="78" height="40" rx="8" fill="#43313a" stroke="#5b4a52"/>
    <circle cx="207" cy="46" r="23" fill="#ee3a30"/>
    <circle cx="300" cy="48" r="26" fill="#4d55e8"/>
    <circle cx="314" cy="30" r="15" fill="#ee4b4b"/><text x="314" y="36" text-anchor="middle" class="badge">9+</text>
    <circle cx="382" cy="49" r="21" fill="#7eaa24"/>
    <path d="M447 30h16v5h-16z" fill="#c9c9c9"/><path d="M463 30h16v5h-16z" fill="#999"/><path d="M479 30h16v5h-16z" fill="#666"/>
    <path d="M538 30h22l5 5h-27z" fill="#f0f0f0"/><path d="M580 27l-5 8" stroke="#e0a020" stroke-width="3"/>
  </svg>
</footer>
</body>
</html>
```
FILE: styles.css
```css
* { box-sizing: border-box; }
body {
  margin: 0;
  width: 3360px;
  height: 1922px;
  overflow: hidden;
  background: #fff;
  font-family: Lato, sans-serif;
  color: #000;
  display: flex;
  flex-direction: column;
}
.defs { position: absolute; width: 0; height: 0; }
h1, h2, p { margin: 0; font-weight: 400; }

/* header */
.topbar {
  height: 81px;
  flex: none;
  border-bottom: 2px solid #ebebeb;
  display: flex;
  font-size: 26px;
  line-height: 76px;
  padding-left: 1034px;
  overflow: hidden;
  white-space: nowrap;
}
.contact { display: flex; color: #ff7d2e; width: 1521px; gap: 34px; flex: none; }
.contact-item { display: flex; gap: 14px; }
.ic-phone { width: 27px; height: 27px; margin-top: 25px; }
.ic-mail { width: 27px; height: 20px; margin-top: 28px; }
.phone { width: 164px; font-size: 24px; letter-spacing: -.7px; }
.mail { letter-spacing: .4px; }
.nav { display: flex; width: 800px; flex: none; letter-spacing: .6px; }
.n1 { width: 265px; }
.n2 { width: 215px; }
.n3 { width: 152px; }
.nav-cta { width: 120px; height: 78px; margin-top: -3px; border-radius: 16px; background: #ff7d2e; flex: none; }

/* hero */
.hero { margin-top: 32px; height: 457px; background: #ff7d2e; color: #fff; flex: none; }
.wrap { width: 1800px; margin-left: 790px; }
.hero-inner { display: flex; justify-content: space-between; }
.hero-text { padding-top: 135px; white-space: nowrap; }
.hero h1 { font-size: 60px; line-height: 76px; letter-spacing: 1.65px; }
.hero p { font-size: 25px; line-height: 45px; margin-top: 24px; letter-spacing: .07px; }
.hero-btn {
  width: 241px;
  height: 91px;
  margin-top: 184px;
  border: 3px solid #fff;
  border-radius: 16px;
  font-size: 29px;
  line-height: 82px;
  letter-spacing: 2.3px;
  text-indent: 2px;
  text-align: center;
}

/* reviews */
h2 { font-size: 60px; line-height: 76px; text-align: center; position: relative; letter-spacing: 1.5px; }
.h-reviews { margin-top: 122px; letter-spacing: 2.1px; }
.dot { position: absolute; left: 1217px; top: 100px; width: 5px; height: 5px; border-radius: 3px; background: #ee1c1c; }
.reviews { display: flex; gap: 70px; margin: 100px 0 0 47px; height: 172px; font-family: Inter, sans-serif; }
.review { width: 374px; flex: none; }
.head { display: flex; justify-content: space-between; height: 73px; }
.head b { display: block; font-size: 17.5px; font-weight: 600; line-height: 26px; margin-top: 3px; letter-spacing: .6px; }
.head time { display: block; font-size: 20px; line-height: 24px; color: #8c8c8c; letter-spacing: -.2px; }
.g { width: 28px; height: 28px; margin: 4px 1px 0 0; }
.stars { display: block; width: 133px; height: 24px; }
.body { display: flex; justify-content: space-between; margin-top: 17px; height: 53px; }
.body p { font-size: 18px; line-height: 26px; white-space: nowrap; letter-spacing: .42px; }
.scroll { width: 6px; height: 53px; background: linear-gradient(#8e8e8e 30px, #ececec 30px); flex: none; }
.next { width: 16px; height: 26px; margin: 73px 0 0 -47px; flex: none; }

/* map */
.h-map { margin-top: 147px; }
.map { position: relative; margin-top: 66px; width: 1800px; height: 558px; overflow: hidden; }
.map-svg { display: block; width: 1800px; height: 558px; font-family: Roboto, sans-serif; }
.water { fill: #90daee; }
.land { fill: #f5f3f4; }
.pk { fill: #c3f1d5; }
.pk2 { fill: #d3f8e2; }
.com { fill: #f9f0dd; }
.mn, .rd, .md, .hw, .hwc, .rail, .railt, .stream, .pkline { fill: none; stroke-linejoin: round; }
.mn { stroke: #d3dfe8; stroke-width: 5; }
.rd { stroke: #d2dbe3; stroke-width: 9; }
.md { stroke: #d5dfe7; stroke-width: 16; }
.hw { stroke: #8aa3bf; stroke-width: 36; }
.hwm { stroke-width: 28; }
.hwc { stroke: #c6d2df; stroke-width: 5; }
.rail { stroke: #d1d3d6; stroke-width: 14; }
.railt { stroke: #d1d3d6; stroke-width: 5; }
.stream { stroke: #90daee; stroke-width: 10; }
.pkline { stroke: #7fd0a8; stroke-width: 3; }
.lb text { paint-order: stroke; stroke: #fff; stroke-width: 10px; stroke-linejoin: round; }
.st { font-size: 52px; fill: #414f60; }
.ds { font-size: 60px; font-weight: 500; fill: #45494e; }
.ds .sm { font-size: 45px; fill: #5e6368; }
.poi { font-size: 62px; }
.pins { filter: drop-shadow(0 4px 5px rgba(0, 0, 0, .35)); }
.shields { font-size: 42px; text-anchor: middle; fill: #333; }
.marker {
  position: absolute;
  left: 870px;
  top: 243px;
  width: 60px;
  height: 60px;
  background: #2cb0ff;
  color: #fff;
  font: 900 56px/60px Roboto, sans-serif;
  text-align: center;
}
.info {
  position: absolute;
  left: 736px;
  top: 89px;
  width: 329px;
  height: 138px;
  background: #fff;
  border-radius: 11px;
  filter: drop-shadow(0 3px 7px rgba(0, 0, 0, .35));
}
.info::after {
  content: "";
  position: absolute;
  left: 148px;
  top: 137px;
  border: 17px solid transparent;
  border-top: 16px solid #fff;
  border-bottom: 0;
}
.close { position: absolute; left: 283px; top: 26px; width: 20px; height: 20px; }
.info p { padding: 73px 0 0 18px; font: 300 20px/24px Roboto, sans-serif; letter-spacing: -.25px; color: #2fb0fb; white-space: nowrap; }

/* taskbar */
.taskbar {
  height: 35px;
  flex: none;
  display: flex;
  border-top: 2px solid #4b4442;
  background: linear-gradient(90deg, #2a1c27 0, #2a1b24 780px, #331f17 1000px, #2e2416 1240px, #2c2918 1750px, #33221a 2200px, #3a1b15 2600px, #34190f 3360px);
  overflow: hidden;
}
.search { width: 344px; height: 60px; margin: 15px 0 0 -4px; border: 2px solid #6b6169; border-radius: 0 30px 30px 0; background: #3c3038; flex: none; }
.apps { width: 640px; height: 35px; margin: -2px 0 0 16px; flex: none; }
.badge { font: 500 17px Roboto, sans-serif; fill: #fff; }
```
